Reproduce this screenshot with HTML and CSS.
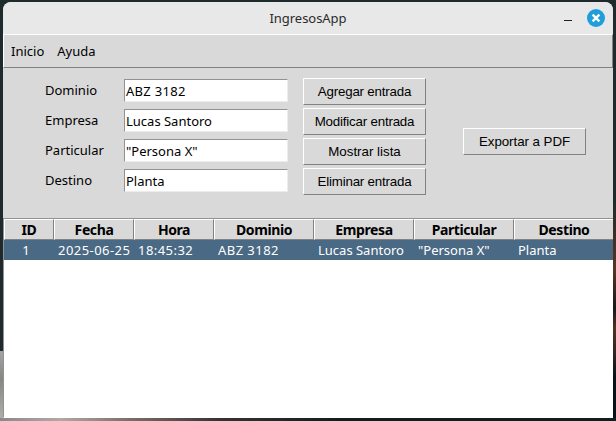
FILE: index.html
```html
<!DOCTYPE html>
<html lang="es">
<head>
<meta charset="utf-8">
<title>IngresosApp</title>
<link rel="stylesheet" href="styles.css">
</head>
<body>
<main class="window">
  <header class="titlebar">
    <span class="title">IngresosApp</span>
    <span class="controls">
      <svg class="minimize" width="8" height="18" viewBox="0 0 8 18"><path d="M0 11.5H8" stroke="#222" stroke-width="1"/></svg>
      <svg class="close" width="18" height="18" viewBox="0 0 18 18"><circle cx="9" cy="9" r="9" fill="#1f9ede"/><path d="M6.4 6.4L11.6 11.6M11.6 6.4L6.4 11.6" stroke="#fff" stroke-width="2.3" stroke-linecap="square"/></svg>
    </span>
  </header>
  <nav class="menu"><span>Inicio</span><span>Ayuda</span></nav>
  <section class="form">
    <div class="labels"><label>Dominio</label><label>Empresa</label><label>Particular</label><label>Destino</label></div>
    <div class="entries"><div class="entry plate">ABZ 3182</div><div class="entry">Lucas Santoro</div><div class="entry">"Persona X"</div><div class="entry">Planta</div></div>
    <div class="actions"><button class="tight">Agregar entrada</button><button class="tight">Modificar entrada</button><button>Mostrar lista</button><button class="tight">Eliminar entrada</button></div>
    <button class="export">Exportar a PDF</button>
  </section>
  <section class="list">
    <div class="row head"><span>ID</span><span>Fecha</span><span>Hora</span><span>Dominio</span><span>Empresa</span><span>Particular</span><span>Destino</span></div>
    <div class="row selected"><span class="id">1</span><span class="num">2025-06-25</span><span class="num">18:45:32</span><span class="num">ABZ 3182</span><span>Lucas Santoro</span><span>"Persona X"</span><span>Planta</span></div>
  </section>
</main>
</body>
</html>
```
FILE: styles.css
```css
* { box-sizing: border-box; }
body {
  margin: 0;
  height: 421px;
  padding: 2px 3px 3px;
  overflow: hidden;
  font: 13px/20px "Noto Sans", sans-serif;
  color: #000;
  background:
    linear-gradient(90deg, #8b8985, #b0aaa4 60px, #796f68 130px, #343430 220px, #101e20 340px) 0 418px / 616px 3px no-repeat,
    linear-gradient(#a4a5a2, #858783 40%, #b0b0ac) 0 351px / 3px 70px no-repeat,
    linear-gradient(#252a28, #5a3424 30%, #19191a 48%, #543020 57%, #352520 68%, #071316 80%) 613px 205px / 3px 216px no-repeat,
    #1e2a2c;
}
.window {
  display: flex;
  flex-direction: column;
  height: 416px;
  border-radius: 8px 8px 0 0;
  overflow: hidden;
  background: #d9d9d9;
}
.titlebar {
  display: grid;
  grid-template-columns: 1fr auto 1fr;
  height: 32px;
  align-items: center;
  background: #e8e8e8;
  color: #2b2b2b;
}
.title { grid-column: 2; letter-spacing: -0.05px; }
.controls { display: flex; justify-content: flex-end; gap: 15px; padding-right: 8px; }
.menu {
  display: flex;
  gap: 13px;
  height: 34px;
  padding: 6px 7px 0;
  border: 1px solid;
  border-color: #fff #828282 #828282 #fff;
}
.form {
  display: flex;
  height: 150px;
  padding-left: 42px;
}
.labels { width: 79px; padding-top: 8px; }
.labels label { display: block; height: 30px; line-height: 29px; }
.entries { width: 164px; padding-top: 11px; }
.entry {
  height: 23px;
  margin-bottom: 7px;
  padding-left: 1px;
  line-height: 23px;
  background: #fff;
  border: 1px solid;
  border-color: #929292 #ececec #ececec #929292;
}
.plate { letter-spacing: 0.3px; }
.actions { display: grid; grid-auto-rows: 27px; gap: 3px; align-content: start; width: 123px; margin-left: 15px; padding-top: 10px; }
button {
  width: 123px;
  height: 27px;
  padding: 0;
  font: 13.33px "Liberation Sans", sans-serif;
  color: #000;
  background: #d9d9d9;
  border: 1px solid;
  border-color: #fff #828282 #828282 #fff;
}
.tight { letter-spacing: -0.2px; }
.export { margin: 60px 0 0 37px; letter-spacing: -0.05px; }
.list { flex: 1; background: #fff; border: 1px solid; border-color: #929292 #fff #fff #929292; border-right: 0; }
.row { display: grid; grid-template-columns: 50px 80px 80px 100px 100px 100px 1fr; white-space: nowrap; }
.head { font-size: 14px; font-weight: bold; text-align: center; height: 21px; letter-spacing: -0.4px; }
.head span { background: #d9d9d9; border: 1px solid; border-color: #fff #828282 #828282 #fff; line-height: 19px; }
.head span:last-child { border-right: 0; }
.selected { height: 20px; color: #fff; background: #4a6984; line-height: 20px; }
.selected span { padding-left: 4px; }
.selected .num { letter-spacing: 0.45px; }
.selected .id { padding: 0 6px 0 0; text-align: center; }
```
